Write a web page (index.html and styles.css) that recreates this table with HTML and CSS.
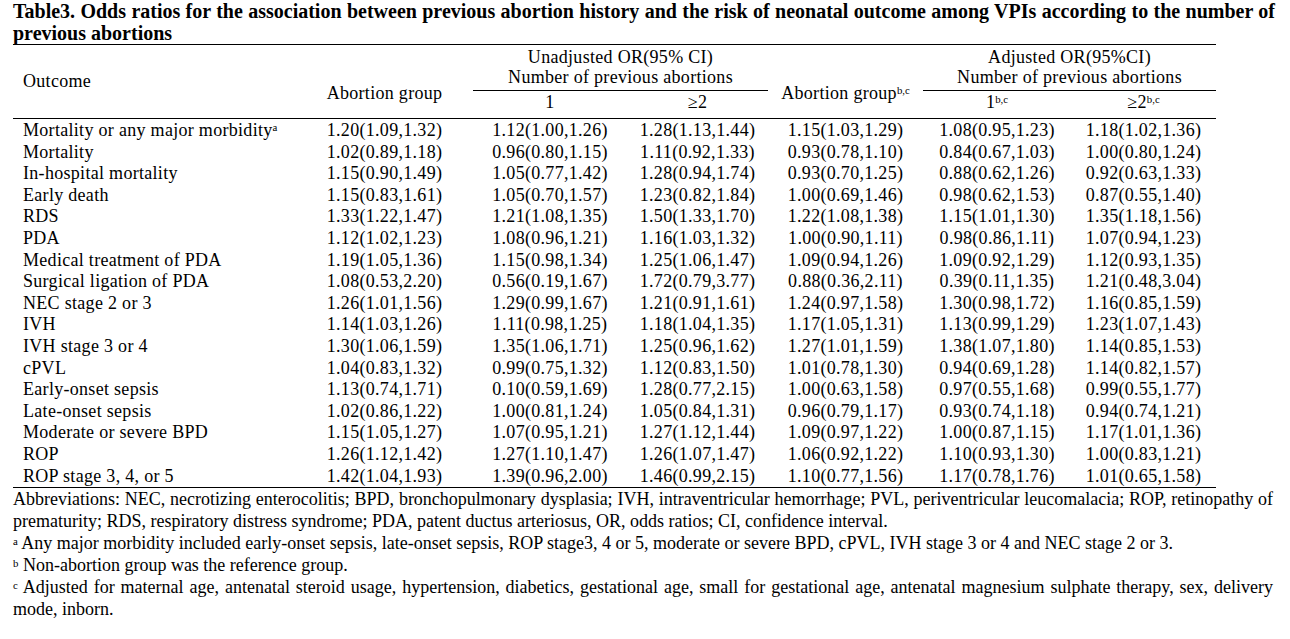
FILE: index.html
```html
<!DOCTYPE html>
<html lang="en">
<head>
<meta charset="utf-8">
<title>Table3</title>
<link rel="stylesheet" href="styles.css">
</head>
<body>
<div class="page">
  <h1 class="title">Table3. Odds ratios for the association between previous abortion history and the risk of neonatal outcome among VPIs according to the number of previous abortions</h1>
  <table class="or-table">
    <colgroup>
      <col class="c-outcome">
      <col class="c-ab">
      <col class="c-one">
      <col class="c-two">
      <col class="c-ab2">
      <col class="c-one2">
      <col class="c-two2">
    </colgroup>
    <thead>
      <tr class="h1">
        <th rowspan="2" class="h-outcome">Outcome</th>
        <th rowspan="2" class="h-group">Abortion group</th>
        <th colspan="2" class="h-span">Unadjusted OR(95% CI)<br>Number of previous abortions</th>
        <th rowspan="2" class="h-group">Abortion group<sup>b,c</sup></th>
        <th colspan="2" class="h-span">Adjusted OR(95%CI)<br>Number of previous abortions</th>
      </tr>
      <tr class="h2">
        <th>1</th>
        <th>≥2</th>
        <th>1<sup>b,c</sup></th>
        <th>≥2<sup>b,c</sup></th>
      </tr>
    </thead>
    <tbody>
      <tr><td>Mortality or any major morbidity<sup>a</sup></td><td>1.20(1.09,1.32)</td><td>1.12(1.00,1.26)</td><td>1.28(1.13,1.44)</td><td>1.15(1.03,1.29)</td><td>1.08(0.95,1.23)</td><td>1.18(1.02,1.36)</td></tr>
      <tr><td>Mortality</td><td>1.02(0.89,1.18)</td><td>0.96(0.80,1.15)</td><td>1.11(0.92,1.33)</td><td>0.93(0.78,1.10)</td><td>0.84(0.67,1.03)</td><td>1.00(0.80,1.24)</td></tr>
      <tr><td>In-hospital mortality</td><td>1.15(0.90,1.49)</td><td>1.05(0.77,1.42)</td><td>1.28(0.94,1.74)</td><td>0.93(0.70,1.25)</td><td>0.88(0.62,1.26)</td><td>0.92(0.63,1.33)</td></tr>
      <tr><td>Early death</td><td>1.15(0.83,1.61)</td><td>1.05(0.70,1.57)</td><td>1.23(0.82,1.84)</td><td>1.00(0.69,1.46)</td><td>0.98(0.62,1.53)</td><td>0.87(0.55,1.40)</td></tr>
      <tr><td>RDS</td><td>1.33(1.22,1.47)</td><td>1.21(1.08,1.35)</td><td>1.50(1.33,1.70)</td><td>1.22(1.08,1.38)</td><td>1.15(1.01,1.30)</td><td>1.35(1.18,1.56)</td></tr>
      <tr><td>PDA</td><td>1.12(1.02,1.23)</td><td>1.08(0.96,1.21)</td><td>1.16(1.03,1.32)</td><td>1.00(0.90,1.11)</td><td>0.98(0.86,1.11)</td><td>1.07(0.94,1.23)</td></tr>
      <tr><td>Medical treatment of PDA</td><td>1.19(1.05,1.36)</td><td>1.15(0.98,1.34)</td><td>1.25(1.06,1.47)</td><td>1.09(0.94,1.26)</td><td>1.09(0.92,1.29)</td><td>1.12(0.93,1.35)</td></tr>
      <tr><td>Surgical ligation of PDA</td><td>1.08(0.53,2.20)</td><td>0.56(0.19,1.67)</td><td>1.72(0.79,3.77)</td><td>0.88(0.36,2.11)</td><td>0.39(0.11,1.35)</td><td>1.21(0.48,3.04)</td></tr>
      <tr><td>NEC stage 2 or 3</td><td>1.26(1.01,1.56)</td><td>1.29(0.99,1.67)</td><td>1.21(0.91,1.61)</td><td>1.24(0.97,1.58)</td><td>1.30(0.98,1.72)</td><td>1.16(0.85,1.59)</td></tr>
      <tr><td>IVH</td><td>1.14(1.03,1.26)</td><td>1.11(0.98,1.25)</td><td>1.18(1.04,1.35)</td><td>1.17(1.05,1.31)</td><td>1.13(0.99,1.29)</td><td>1.23(1.07,1.43)</td></tr>
      <tr><td>IVH stage 3 or 4</td><td>1.30(1.06,1.59)</td><td>1.35(1.06,1.71)</td><td>1.25(0.96,1.62)</td><td>1.27(1.01,1.59)</td><td>1.38(1.07,1.80)</td><td>1.14(0.85,1.53)</td></tr>
      <tr><td>cPVL</td><td>1.04(0.83,1.32)</td><td>0.99(0.75,1.32)</td><td>1.12(0.83,1.50)</td><td>1.01(0.78,1.30)</td><td>0.94(0.69,1.28)</td><td>1.14(0.82,1.57)</td></tr>
      <tr><td>Early-onset sepsis</td><td>1.13(0.74,1.71)</td><td>0.10(0.59,1.69)</td><td>1.28(0.77,2.15)</td><td>1.00(0.63,1.58)</td><td>0.97(0.55,1.68)</td><td>0.99(0.55,1.77)</td></tr>
      <tr><td>Late-onset sepsis</td><td>1.02(0.86,1.22)</td><td>1.00(0.81,1.24)</td><td>1.05(0.84,1.31)</td><td>0.96(0.79,1.17)</td><td>0.93(0.74,1.18)</td><td>0.94(0.74,1.21)</td></tr>
      <tr><td>Moderate or severe BPD</td><td>1.15(1.05,1.27)</td><td>1.07(0.95,1.21)</td><td>1.27(1.12,1.44)</td><td>1.09(0.97,1.22)</td><td>1.00(0.87,1.15)</td><td>1.17(1.01,1.36)</td></tr>
      <tr><td>ROP</td><td>1.26(1.12,1.42)</td><td>1.27(1.10,1.47)</td><td>1.26(1.07,1.47)</td><td>1.06(0.92,1.22)</td><td>1.10(0.93,1.30)</td><td>1.00(0.83,1.21)</td></tr>
      <tr><td>ROP stage 3, 4, or 5</td><td>1.42(1.04,1.93)</td><td>1.39(0.96,2.00)</td><td>1.46(0.99,2.15)</td><td>1.10(0.77,1.56)</td><td>1.17(0.78,1.76)</td><td>1.01(0.65,1.58)</td></tr>
    </tbody>
  </table>
  <div class="notes">
    <p>Abbreviations: NEC, necrotizing enterocolitis; BPD, bronchopulmonary dysplasia; IVH, intraventricular hemorrhage; PVL, periventricular leucomalacia; ROP, retinopathy of prematurity; RDS, respiratory distress syndrome; PDA, patent ductus arteriosus, OR, odds ratios; CI, confidence interval.</p>
    <p><sup>a</sup> Any major morbidity included early-onset sepsis, late-onset sepsis, ROP stage3, 4 or 5, moderate or severe BPD, cPVL, IVH stage 3 or 4 and NEC stage 2 or 3.</p>
    <p><sup>b</sup> Non-abortion group was the reference group.</p>
    <p><sup>c</sup> Adjusted for maternal age, antenatal steroid usage, hypertension, diabetics, gestational age, small for gestational age, antenatal magnesium sulphate therapy, sex, delivery mode, inborn.</p>
  </div>
</div>
</body>
</html>
```

FILE: styles.css
```css
html, body {
  margin: 0;
  padding: 0;
  background: #ffffff;
}

body {
  font-family: "Liberation Serif", "Times New Roman", serif;
  color: #000000;
  font-size: 18px;
}

.page {
  padding: 1px 13px 0 13px;
}

.title {
  margin: 0;
  font-size: 20px;
  font-weight: bold;
  line-height: 21.5px;
  width: 1262px;
  text-align: justify;
}

.or-table {
  border-collapse: collapse;
  table-layout: fixed;
  width: 1203px;
  font-size: 18px;
  letter-spacing: 0.3px;
}

.c-outcome { width: 283px; }
.c-ab { width: 177px; }
.c-one { width: 154px; }
.c-two { width: 141px; }
.c-ab2 { width: 155px; }
.c-one2 { width: 148px; }
.c-two2 { width: 145px; }

.or-table th {
  font-weight: normal;
  padding: 0;
  text-align: center;
  white-space: nowrap;
}

.or-table sup {
  font-size: 0.6em;
  line-height: 0;
  vertical-align: 0.5em;
  letter-spacing: 0;
}

.h1 th {
  border-top: 1px solid #000;
}

.or-table .h-span {
  line-height: 20px;
  padding: 2px 0 3px 0;
  border-bottom: 1px solid #000;
}

.or-table .h-outcome {
  text-align: left;
  padding-left: 10px;
  vertical-align: middle;
  border-bottom: 1px solid #000;
}

.or-table .h-group {
  vertical-align: bottom;
  padding-bottom: 15px;
  line-height: 20px;
  border-bottom: 1px solid #000;
}

.or-table .h2 th {
  line-height: 20px;
  padding: 1px 0 6px 0;
  border-bottom: 1px solid #000;
}

.or-table td {
  padding: 0;
  line-height: 21.6px;
  text-align: center;
  white-space: nowrap;
}

.or-table td:first-child {
  text-align: left;
  padding-left: 10px;
}

.or-table tbody tr:first-child td {
  padding-top: 1px;
}

.or-table tbody tr:last-child td {
  border-bottom: 1px solid #000;
}

.notes {
  width: 1260px;
}

.notes p {
  margin: 0;
  line-height: 22px;
  font-size: 18px;
  text-align: justify;
}

.notes sup {
  font-size: 0.6em;
  line-height: 0;
  vertical-align: 0.4em;
}
```
